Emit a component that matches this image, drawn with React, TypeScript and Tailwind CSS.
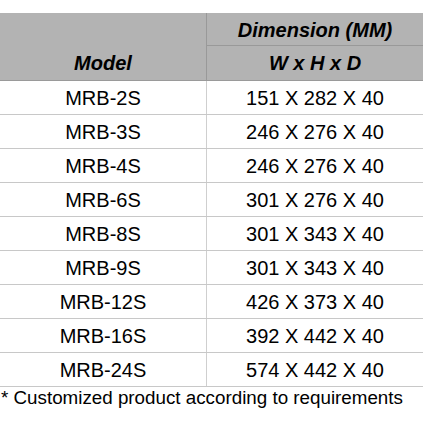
import React from "react";

const rows: [string, string][] = [
  ["MRB-2S", "151 X 282 X 40"],
  ["MRB-3S", "246 X 276 X 40"],
  ["MRB-4S", "246 X 276 X 40"],
  ["MRB-6S", "301 X 276 X 40"],
  ["MRB-8S", "301 X 343 X 40"],
  ["MRB-9S", "301 X 343 X 40"],
  ["MRB-12S", "426 X 373 X 40"],
  ["MRB-16S", "392 X 442 X 40"],
  ["MRB-24S", "574 X 442 X 40"],
];

export default function App() {
  return (
    <div
      className="w-[423px] h-[423px] bg-white text-black overflow-hidden"
      style={{ fontFamily: '"Liberation Sans", Arial, sans-serif' }}
    >
      <div className="h-[13px]" />
      <div className="grid grid-cols-[206px_1px_216px] bg-[#b3b3b3] border-b border-[#9a9a9a] h-[68px]">
        <div className="flex items-end justify-center pb-[5px] text-[20px] font-bold italic leading-none">
          <span className="pb-[2px]">Model</span>
        </div>
        <div className="bg-[#999999]" />
        <div className="flex flex-col">
          <div className="h-[33px] flex items-center justify-center text-[20px] font-bold italic border-b border-[#999999] leading-none pt-[2px]">
            Dimension (MM)
          </div>
          <div className="flex-1 flex items-center justify-center text-[20px] font-bold italic leading-none">
            W x H x D
          </div>
        </div>
      </div>
      {rows.map(([m, d]) => (
        <div
          key={m}
          className="grid grid-cols-[206px_1px_216px] h-[34px] border-b border-[#c8c8c8]"
        >
          <div className="flex items-center justify-center text-[20px] leading-none">{m}</div>
          <div className="bg-[#cfcfcf]" />
          <div className="flex items-center justify-center text-[20px] leading-none">{d}</div>
        </div>
      ))}
      <div className="pl-[1px] pt-0 text-[18.8px] leading-[22px]">
        * Customized product according to requirements
      </div>
    </div>
  );
}
